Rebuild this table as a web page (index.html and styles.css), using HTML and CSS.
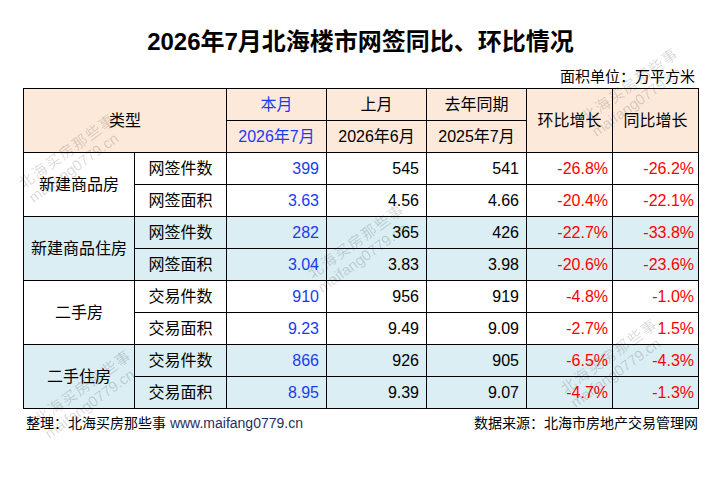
FILE: index.html
```html
<!DOCTYPE html>
<html lang="zh-CN">
<head>
<meta charset="utf-8">
<title>2026年7月北海楼市网签同比、环比情况</title>
<link rel="stylesheet" href="styles.css">
</head>
<body>
<div class="page">
  <h1 class="title">2026年7月北海楼市网签同比、环比情况</h1>
  <div class="unit">面积单位：万平方米</div>
  <table class="data">
    <colgroup>
      <col class="c-group"><col class="c-item"><col class="c-num"><col class="c-num"><col class="c-num"><col class="c-pct"><col class="c-pct">
    </colgroup>
    <thead>
      <tr>
        <th colspan="2" rowspan="2">类型</th>
        <th class="blue">本月</th>
        <th>上月</th>
        <th>去年同期</th>
        <th rowspan="2">环比增长</th>
        <th rowspan="2">同比增长</th>
      </tr>
      <tr>
        <th class="blue">2026年7月</th>
        <th>2026年6月</th>
        <th>2025年7月</th>
      </tr>
    </thead>
    <tbody>
      <tr>
        <td rowspan="2" class="grp">新建商品房</td>
        <td class="item">网签件数</td>
        <td class="num blue">399</td><td class="num">545</td><td class="num">541</td>
        <td class="pct">-26.8%</td><td class="pct">-26.2%</td>
      </tr>
      <tr>
        <td class="item">网签面积</td>
        <td class="num blue">3.63</td><td class="num">4.56</td><td class="num">4.66</td>
        <td class="pct">-20.4%</td><td class="pct">-22.1%</td>
      </tr>
      <tr class="alt">
        <td rowspan="2" class="grp">新建商品住房</td>
        <td class="item">网签件数</td>
        <td class="num blue">282</td><td class="num">365</td><td class="num">426</td>
        <td class="pct">-22.7%</td><td class="pct">-33.8%</td>
      </tr>
      <tr class="alt">
        <td class="item">网签面积</td>
        <td class="num blue">3.04</td><td class="num">3.83</td><td class="num">3.98</td>
        <td class="pct">-20.6%</td><td class="pct">-23.6%</td>
      </tr>
      <tr>
        <td rowspan="2" class="grp">二手房</td>
        <td class="item">交易件数</td>
        <td class="num blue">910</td><td class="num">956</td><td class="num">919</td>
        <td class="pct">-4.8%</td><td class="pct">-1.0%</td>
      </tr>
      <tr>
        <td class="item">交易面积</td>
        <td class="num blue">9.23</td><td class="num">9.49</td><td class="num">9.09</td>
        <td class="pct">-2.7%</td><td class="pct">1.5%</td>
      </tr>
      <tr class="alt">
        <td rowspan="2" class="grp">二手住房</td>
        <td class="item">交易件数</td>
        <td class="num blue">866</td><td class="num">926</td><td class="num">905</td>
        <td class="pct">-6.5%</td><td class="pct">-4.3%</td>
      </tr>
      <tr class="alt">
        <td class="item">交易面积</td>
        <td class="num blue">8.95</td><td class="num">9.39</td><td class="num">9.07</td>
        <td class="pct">-4.7%</td><td class="pct">-1.3%</td>
      </tr>
    </tbody>
  </table>
  <div class="footer">
    <span class="credit">整理：北海买房那些事 <span class="url">www.maifang0779.cn</span></span>
    <span class="source">数据来源：北海市房地产交易管理网</span>
  </div>

  <div class="wm wm-a"><span class="wm-cn">北海买房那些事</span><span class="wm-en">maifang0779.cn</span></div>
  <div class="wm wm-b"><span class="wm-cn">北海买房那些事</span><span class="wm-en">maifang0779.cn</span></div>
  <div class="wm wm-c"><span class="wm-cn">北海买房那些事</span><span class="wm-en">maifang0779.cn</span></div>
  <div class="wm wm-d"><span class="wm-cn">北海买房那些事</span><span class="wm-en">maifang0779.cn</span></div>
  <div class="wm wm-e"><span class="wm-cn">北海买房那些事</span><span class="wm-en">maifang0779.cn</span></div>
</div>
</body>
</html>
```

FILE: styles.css
```css
html, body {
  margin: 0;
  padding: 0;
  background: #ffffff;
}

.page {
  position: relative;
  width: 720px;
  height: 480px;
  box-sizing: border-box;
  padding: 26px 22px 0 23px;
  font-family: "Liberation Sans", "Noto Sans CJK SC", sans-serif;
  color: #000;
  overflow: hidden;
}

.title {
  margin: 0;
  height: 32px;
  line-height: 32px;
  text-align: center;
  font-size: 24px;
  font-weight: bold;
  font-family: "Liberation Sans", "Noto Sans CJK SC", sans-serif;
}

.unit {
  margin-top: 9px;
  height: 20px;
  line-height: 20px;
  text-align: right;
  padding-right: 3px;
  font-size: 15px;
}

.data {
  margin-top: 1px;
  width: 675px;
  border-collapse: collapse;
  table-layout: fixed;
  font-size: 16px;
}

.c-group { width: 111px; }
.c-item { width: 92px; }
.c-num { width: 100px; }
.c-pct { width: 86px; }

.data th,
.data td {
  border: 1px solid #000;
  height: 31px;
  padding: 0;
  line-height: 20px;
  vertical-align: middle;
  text-align: center;
  font-weight: normal;
}

.data th {
  background: #fde9d9;
}

.data tr.alt td {
  background: #daeef3;
}

.data td.num {
  text-align: right;
  padding-right: 7px;
}

.data td.pct {
  text-align: right;
  padding-right: 4px;
  color: #ff0000;
}

.blue,
.data td.blue {
  color: #1a3cf0;
}

.footer {
  margin-top: 4px;
  display: flex;
  justify-content: space-between;
  height: 20px;
  line-height: 20px;
  font-size: 14px;
  padding-left: 3px;
}

.url {
  color: #1f3064;
  font-size: 14px;
}

/* watermark overlays */
.wm {
  position: absolute;
  display: flex;
  flex-direction: column;
  align-items: flex-start;
  color: rgba(0, 0, 0, 0.16);
  transform: translate(-50%, -50%) rotate(-36deg);
  pointer-events: none;
  white-space: nowrap;
}

.wm-cn {
  font-size: 15px;
  line-height: 17px;
  letter-spacing: 1.5px;
}

.wm-en {
  font-size: 15px;
  line-height: 17px;
}

.wm-a { left: 72px; top: 158px; }
.wm-b { left: 635px; top: 92px; }
.wm-c { left: 361px; top: 248px; }
.wm-d { left: 614px; top: 363px; }
.wm-e { left: 88px; top: 394px; }
```
